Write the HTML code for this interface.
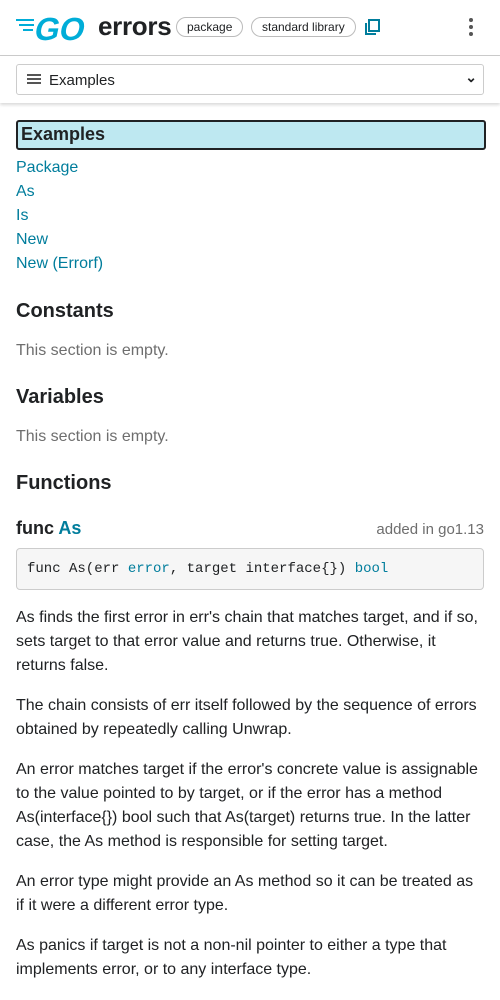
<!DOCTYPE html>
<html><head><meta charset="utf-8"><style>
*{box-sizing:border-box;margin:0;padding:0}
body{width:500px;height:1000px;overflow:hidden;background:#fff;font-family:"Liberation Sans",sans-serif;color:#202224}
.hdr{position:absolute;top:0;left:0;width:500px;height:56px;border-bottom:1px solid #ccc;background:#fff}
.nav{position:absolute;top:56px;left:0;width:500px;height:47px;box-shadow:0 2px 3px rgba(0,0,0,.15);background:#fff}
.sel{position:absolute;left:16px;top:8px;width:468px;height:31px;border:1px solid #ccc;border-radius:3px;font-size:15px}
.pill{position:absolute;top:17px;height:20px;border:1px solid #bbb;border-radius:10px;font-size:12px;line-height:18px;padding:0 10px}
a{color:#007d9c;text-decoration:none}
.ex{position:absolute;left:16px;top:120px;width:470px;height:30px;background:#bee8f1;border:2px solid #202224;border-radius:3px;font-size:18px;font-weight:bold;padding:2px 3px}
.links{position:absolute;left:16px;top:156px;font-size:16px;line-height:24px}
h2{position:absolute;left:16px;font-size:20px;font-weight:bold}
.empty{position:absolute;left:16px;font-size:16px;color:#6e6e6e}
.code{position:absolute;left:16px;top:548px;width:468px;height:42px;background:#f6f6f6;border:1px solid #ccc;border-radius:4px;font-family:"Liberation Mono",monospace;font-size:14px;padding:12px 10px}
p{position:absolute;left:16px;width:464px;font-size:16px;line-height:24px}
</style></head><body>
<div class="hdr">
<svg style="position:absolute;left:16px;top:12px" width="76" height="32" viewBox="0 0 76 32">
<g fill="#00add8"><rect x="0" y="7" width="18" height="2"/><rect x="3" y="12" width="15" height="2"/><rect x="7" y="17" width="10" height="2"/></g>
<text x="19" y="28" font-family="Liberation Sans" font-weight="bold" font-size="32" fill="#00add8" transform="skewX(-12) translate(4,0)">GO</text></svg>
<div style="position:absolute;left:98px;top:11px;font-size:26px;font-weight:bold;letter-spacing:-0.3px">errors</div>
<div class="pill" style="left:176px">package</div>
<div class="pill" style="left:251px">standard library</div>
<svg style="position:absolute;left:365px;top:19px" width="15" height="16" viewBox="0 0 15 16"><rect x="4" y="1" width="10" height="11" fill="none" stroke="#007d9c" stroke-width="2"/><path d="M1 4v11h10" fill="none" stroke="#007d9c" stroke-width="2"/></svg>
<div style="position:absolute;left:469px;top:18px;width:5px">
<div style="width:4px;height:4px;border-radius:2px;background:#555;margin-bottom:3px"></div><div style="width:4px;height:4px;border-radius:2px;background:#555;margin-bottom:3px"></div><div style="width:4px;height:4px;border-radius:2px;background:#555"></div></div>
</div>
<div class="nav"><div class="sel">
<div style="position:absolute;left:10px;top:9px;width:14px">
<div style="height:2px;background:#555;margin-bottom:2px"></div><div style="height:2px;background:#555;margin-bottom:2px"></div><div style="height:2px;background:#555"></div></div>
<span style="position:absolute;left:32px;top:7px">Examples</span>
<span style="position:absolute;right:6px;top:4px;font-size:14px;font-weight:bold">&#8964;</span>
</div></div>
<div class="ex">Examples</div>
<div class="links"><a>Package</a><br><a>As</a><br><a>Is</a><br><a>New</a><br><a>New (Errorf)</a></div>
<h2 style="top:300px">Constants</h2>
<div class="empty" style="top:342px">This section is empty.</div>
<h2 style="top:386px">Variables</h2>
<div class="empty" style="top:428px">This section is empty.</div>
<h2 style="top:472px">Functions</h2>
<div style="position:absolute;left:16px;top:518px;font-size:18px;font-weight:bold">func <a>As</a></div>
<div style="position:absolute;right:16px;top:521px;font-size:15px;color:#6e6e6e">added in go1.13</div>
<div class="code">func As(err <a>error</a>, target interface{}) <a>bool</a></div>
<p style="top:606px">As finds the first error in err's chain that matches target, and if so, sets target to that error value and returns true. Otherwise, it returns false.</p>
<p style="top:694px">The chain consists of err itself followed by the sequence of errors obtained by repeatedly calling Unwrap.</p>
<p style="top:758px">An error matches target if the error's concrete value is assignable to the value pointed to by target, or if the error has a method As(interface{}) bool such that As(target) returns true. In the latter case, the As method is responsible for setting target.</p>
<p style="top:870px">An error type might provide an As method so it can be treated as<br>if it were a different error type.</p>
<p style="top:934px">As panics if target is not a non-nil pointer to either a type that implements error, or to any interface type.</p>
</body></html>
